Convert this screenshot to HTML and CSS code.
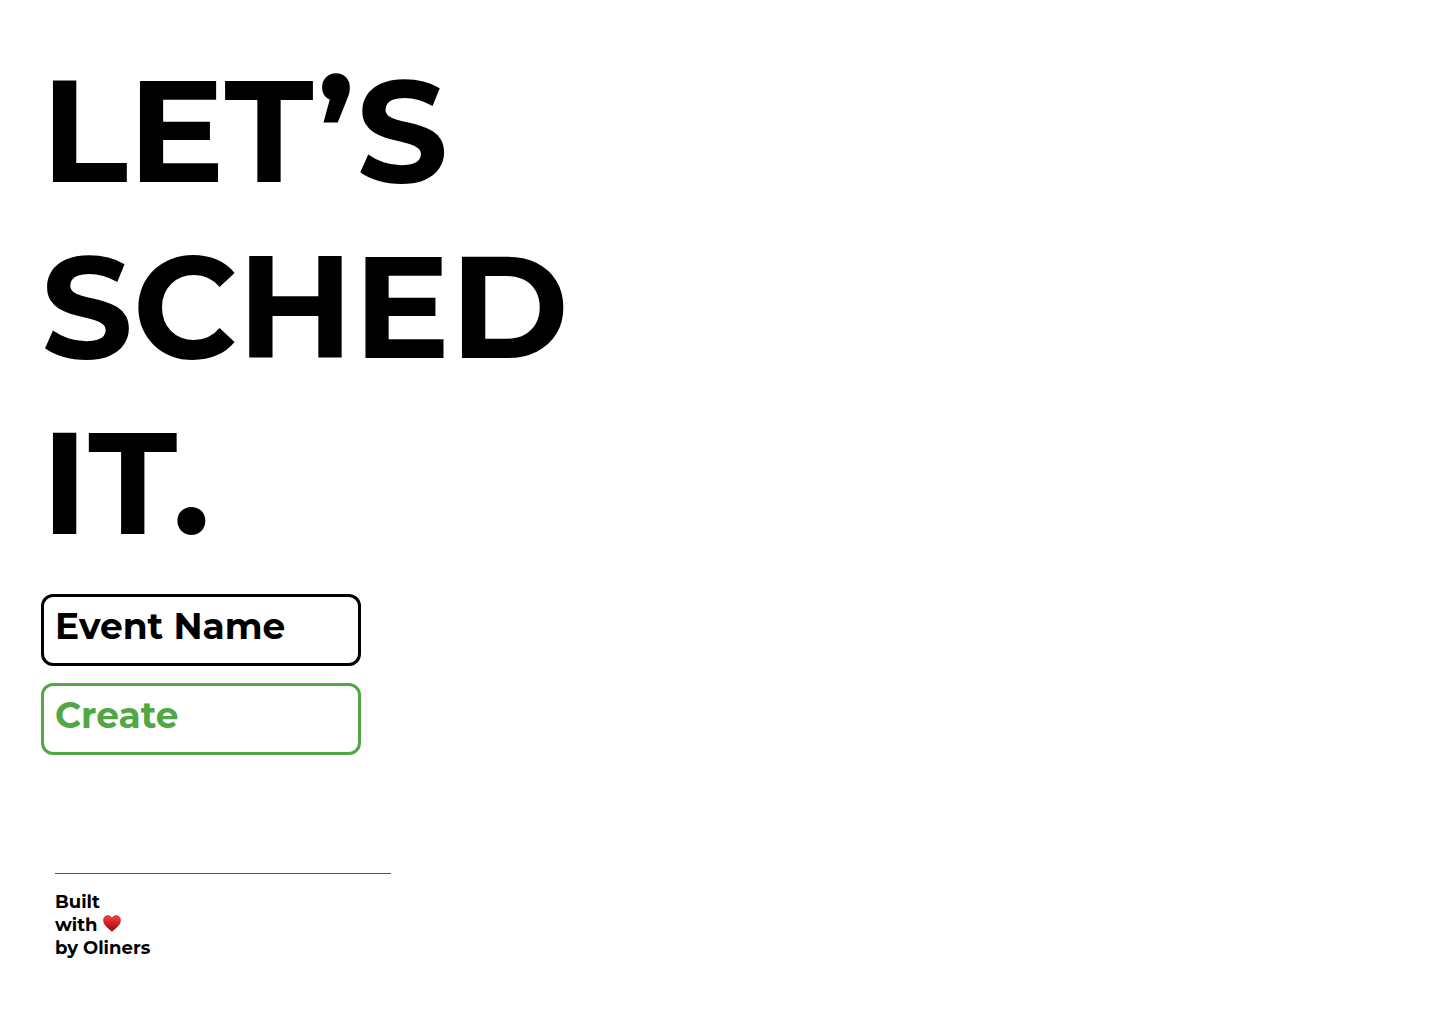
FILE: index.html
```html
<!DOCTYPE html>
<html lang="en">
<head>
<meta charset="utf-8">
<title>Let’s Sched It</title>
<meta name="viewport" content="width=device-width, initial-scale=1">
<link rel="stylesheet" href="styles.css">
</head>
<body>
<main class="page">
  <h1 class="headline">LET’S<br>SCHED<br>IT.</h1>
  <form class="event-form">
    <input class="field" type="text" aria-label="Event Name" placeholder="Event Name">
    <button class="field field-create" type="button">Create</button>
  </form>
  <footer class="credits">
    <p class="credits-text">Built<br>with <svg class="heart" viewBox="0 0 18 17" role="img" aria-label="love"><defs><linearGradient id="heart-fill" x1="0" y1="0" x2="0" y2="1"><stop offset="0" stop-color="#ee4a46"/><stop offset="0.500" stop-color="#d01f1d"/><stop offset="1" stop-color="#9c0806"/></linearGradient></defs><path fill="url(#heart-fill)" stroke="#a8100e" stroke-width="0.500" d="M9 16.500C7.500 14.500 0.500 11 0.500 5.200C0.500 2.400 2.300 0.500 4.800 0.500C6.800 0.500 8.300 1.700 9 3.200C9.700 1.700 11.200 0.500 13.200 0.500C15.700 0.500 17.500 2.400 17.500 5.200C17.500 11 10.500 14.500 9 16.500Z"/></svg><br>by Oliners</p>
  </footer>
</main>
</body>
</html>
```

FILE: styles.css
```css
* {
  box-sizing: border-box;
}

body {
  margin: 0;
  background: #fff;
  color: #000;
  font-family: Montserrat, Inter, "Liberation Sans", sans-serif;
  font-weight: 700;
}

.page {
  padding: 43px 41px;
}

.headline {
  margin: 0;
  font-size: 144px;
  line-height: 176px;
  font-weight: 700;
}

.event-form {
  display: flex;
  flex-direction: column;
  gap: 17px;
  max-width: 320px;
  margin-top: 23px;
}

.field {
  width: 100%;
  height: 72px;
  padding: 0 11px 8px;
  border: 3px solid #000;
  border-radius: 12px;
  background: #fff;
  color: #000;
  font: inherit;
  font-size: 36px;
  text-align: left;
}

.field::placeholder {
  color: #000;
  opacity: 1;
}

.field-create {
  border-color: #50a744;
  color: #50a744;
}

.credits {
  max-width: 350px;
  margin-top: 118px;
  padding-left: 14px;
}

.credits-text {
  margin: 0;
  padding-top: 17px;
  border-top: 1px solid #555;
  font-size: 18px;
  line-height: 23px;
}

.heart {
  width: 18px;
  height: 17px;
  vertical-align: -1px;
}
```
